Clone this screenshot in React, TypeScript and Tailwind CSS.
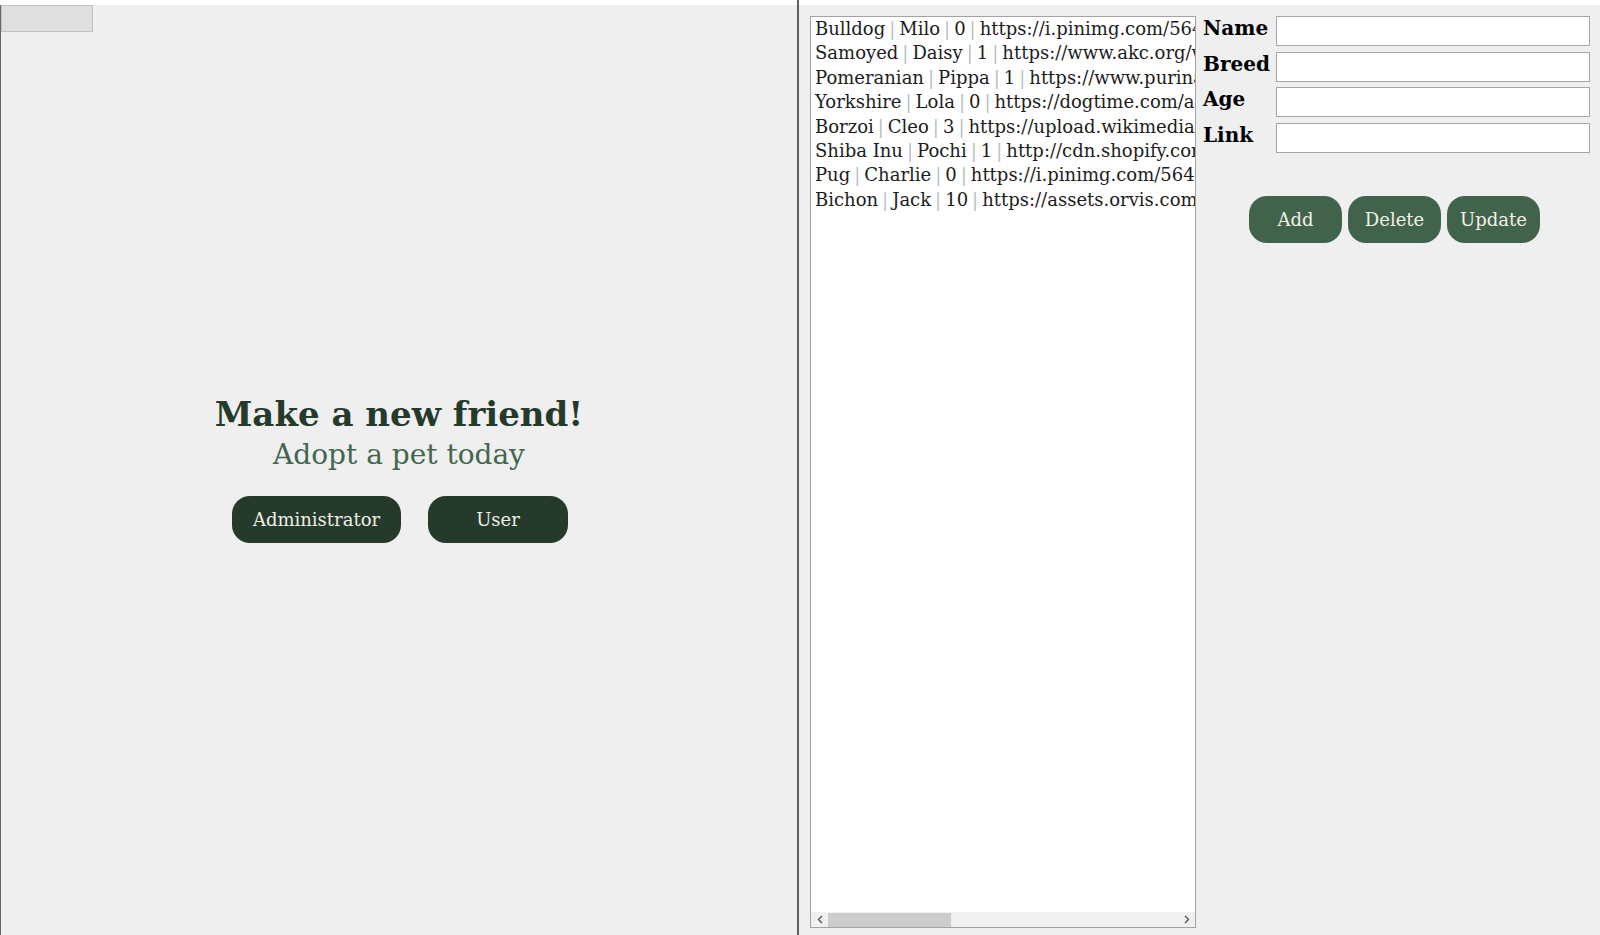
import React from "react";

type Pet = { breed: string; name: string; age: number; link: string };

const pets: Pet[] = [
  { breed: "Bulldog", name: "Milo", age: 0, link: "https://i.pinimg.com/564x/2b/7e/1f/2b7e1f0c5a.jpg" },
  { breed: "Samoyed", name: "Daisy", age: 1, link: "https://www.akc.org/wp-content/uploads/samoyed.jpg" },
  { breed: "Pomeranian", name: "Pippa", age: 1, link: "https://www.purina.co.uk/sites/default/files/pom.jpg" },
  { breed: "Yorkshire", name: "Lola", age: 0, link: "https://dogtime.com/assets/uploads/yorkie.jpg" },
  { breed: "Borzoi", name: "Cleo", age: 3, link: "https://upload.wikimedia.org/wikipedia/commons/borzoi.jpg" },
  { breed: "Shiba Inu", name: "Pochi", age: 1, link: "http://cdn.shopify.com/s/files/1/shiba.jpg" },
  { breed: "Pug", name: "Charlie", age: 0, link: "https://i.pinimg.com/564x/9f/3a/pug.jpg" },
  { breed: "Bichon", name: "Jack", age: 10, link: "https://assets.orvis.com/is/image/orvisprd/bichon.jpg" },
];

const serif = "font-['DejaVu_Serif','Liberation_Serif',serif]";

function Sep() {
  return <span className="text-[#b4bec8] px-[4px]">|</span>;
}

function PetList() {
  return (
    <div className="w-[386px] h-[912px] bg-white border border-[#a3a3a3] flex flex-col">
      <div className={`flex-1 overflow-hidden pl-[4px] text-[18px] leading-[24.4px] text-[#1c1c1c] ${serif}`}>
        {pets.map((p) => (
          <div key={p.name} className="whitespace-nowrap">
            {p.breed}
            <Sep />
            {p.name}
            <Sep />
            {p.age}
            <Sep />
            {p.link}
          </div>
        ))}
      </div>
      {/* horizontal scrollbar */}
      <div className="h-[15px] bg-[#f0f0f0] flex items-center">
        <div className="w-[17px] flex justify-center">
          <svg width="6" height="9" viewBox="0 0 6 9">
            <polyline points="5,1 1.5,4.5 5,8" fill="none" stroke="#555" strokeWidth="1.4" />
          </svg>
        </div>
        <div className="w-[123px] h-[14px] bg-[#cdcdcd]" />
        <div className="flex-1" />
        <div className="w-[17px] flex justify-center">
          <svg width="6" height="9" viewBox="0 0 6 9">
            <polyline points="1,1 4.5,4.5 1,8" fill="none" stroke="#555" strokeWidth="1.4" />
          </svg>
        </div>
      </div>
    </div>
  );
}

function PetForm() {
  const fields = ["Name", "Breed", "Age", "Link"];
  return (
    <div className="flex-1 pl-[7px] pr-[10px]">
      <div className="flex flex-col gap-[5.5px]">
        {fields.map((f) => (
          <div key={f} className="flex items-start">
            <label className={`w-[73px] text-[20px] leading-[24px] font-bold text-black ${serif}`}>{f}</label>
            <input className="w-[314px] h-[30px] bg-white border border-[#a5a5a5] outline-none" />
          </div>
        ))}
      </div>
      <div className="mt-[43px] flex justify-center gap-[6px] pr-[4px]">
        {["Add", "Delete", "Update"].map((b) => (
          <button
            key={b}
            className={`w-[93px] h-[47px] rounded-[18px] bg-[#42634b] text-[#f1f1e6] text-[18px] ${serif}`}
          >
            {b}
          </button>
        ))}
      </div>
    </div>
  );
}

export default function App() {
  return (
    <div className="w-[1600px] h-[935px] flex overflow-hidden bg-white">
      <div className="w-[798px] flex flex-col">
        <div className="h-[5px] bg-white" />
        <div className="flex-1 bg-[#efefef] border-l border-[#5f6b64] flex flex-col">
          <button className="w-[92px] h-[27px] bg-[#dfdfdf] border border-[#c2c2c2]" />
          <div className="pt-[362px] flex flex-col items-center">
            <h1 className={`text-[34px] leading-[40.8px] font-bold text-[#243a2a] ${serif}`}>Make a new friend!</h1>
            <h2 className={`mt-[3px] text-[28px] leading-[33.6px] text-[#43664d] ${serif}`}>Adopt a pet today</h2>
            <div className="mt-[25px] flex gap-[27px] pl-[2px]">
              <button className={`w-[169px] h-[47px] rounded-[18px] bg-[#253a2b] text-[#efefe6] text-[18px] ${serif}`}>
                Administrator
              </button>
              <button className={`w-[140px] h-[47px] rounded-[18px] bg-[#253a2b] text-[#efefe6] text-[18px] ${serif}`}>
                User
              </button>
            </div>
          </div>
        </div>
      </div>
      <div className="w-[2px] bg-[#58645e]" />
      <div className="flex-1 flex flex-col">
        <div className="h-[5px] bg-white" />
        <div className="flex-1 bg-[#efefef] pt-[11px] pl-[11px] flex">
          <PetList />
          <PetForm />
        </div>
      </div>
    </div>
  );
}
